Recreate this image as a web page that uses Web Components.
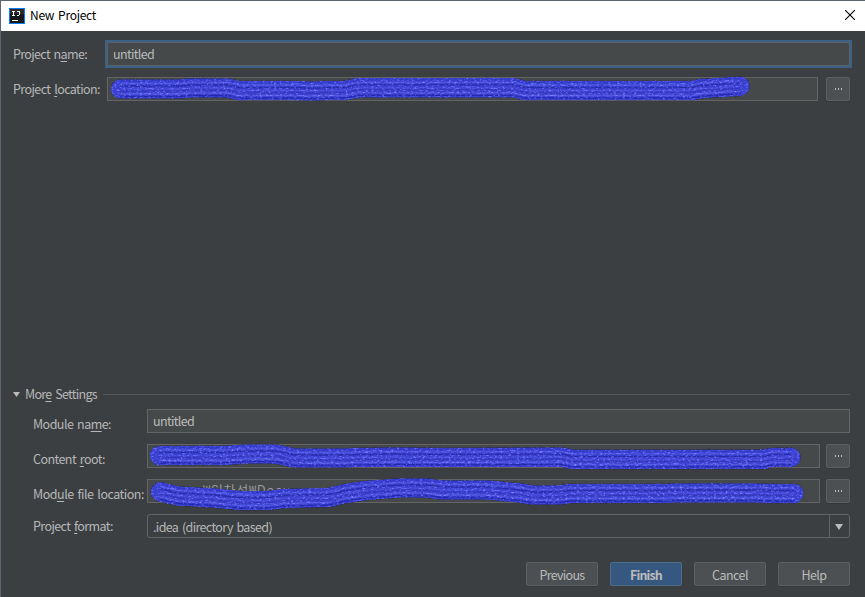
<!DOCTYPE html>
<html lang="en"><head><meta charset="utf-8"><title>New Project</title>
<style>html,body{margin:0;height:100%;overflow:hidden;background:#3c3f41}</style></head><body>
<project-dialog></project-dialog>
<script>
class BaseEl extends HTMLElement{
  mount(html){this.attachShadow({mode:'open'}).innerHTML=html}
}
/* A single line of text whose tracking is adjusted to fill the width "w". */
customElements.define('fit-text',class extends BaseEl{
  connectedCallback(){
    this.mount('<style>:host{display:block;white-space:nowrap}span{display:inline-block;white-space:pre;word-spacing:1.5px}::slotted(u){text-decoration-thickness:1px;text-underline-offset:2px;text-decoration-skip-ink:none}</style><span><slot></slot></span>');
    const s=this.shadowRoot.querySelector('span'),w=+this.getAttribute('w');
    if(w)s.style.letterSpacing=((w-s.getBoundingClientRect().width)/this.textContent.length)+'px';
  }});
customElements.define('title-bar',class extends BaseEl{
  connectedCallback(){this.mount(`<style>:host{display:flex;box-sizing:border-box;height:30px;padding:0 10px 0 8px;align-items:center;background:#fff;color:#000;font-size:12px}
  fit-text{margin-left:5px;flex:1;line-height:28px;height:30px}svg{display:block}.x{position:relative;top:-1px}</style>
  <svg width="16" height="16" shape-rendering="crispEdges"><rect width="16" height="16" fill="#087cfa"/><rect x="1" y="1" width="14" height="14" fill="#151719"/><rect x="1" y="1" width="14" height="5" fill="#2b2b2b"/><path d="M3 3.5h3M4.5 3v5M3 7.5h3M8 3.5h3M10.5 3v4M8 7.5h2M3 12.5h6" stroke="#fff" fill="none"/></svg>
  <fit-text w="66">${this.textContent}</fit-text>
  <svg class="x" width="10" height="10"><path d="M0 0L10 10M10 0L0 10" stroke="#000" stroke-width="1.1"/></svg>`)}});
customElements.define('text-field',class extends BaseEl{
  connectedCallback(){this.mount(`<style>:host{display:block;box-sizing:border-box;height:24px;border:1px solid #646464;background:#45494a;padding-left:5px;line-height:22px;flex:1;min-width:0;color:#bbb}
  :host([focused]){box-shadow:0 0 0 2px #3d6185;border-color:#55626c}</style><slot></slot>`)}});
customElements.define('push-button',class extends BaseEl{
  connectedCallback(){this.mount(`<style>:host{display:flex;justify-content:center;box-sizing:border-box;width:72px;height:24px;border:1px solid #5e6060;border-radius:2px;background:#4c5052;box-shadow:0 1px 0 #35383a;line-height:23px;color:#bbb}
  :host([primary]){background:#365880;border-color:#4c708c;font-weight:700;box-shadow:none}
  :host([browse]){width:24px;align-items:center}</style><slot></slot>`)}});
customElements.define('dots-icon',class extends BaseEl{
  connectedCallback(){this.mount(`<style>:host,svg{display:block}</style><svg width="8" height="2" shape-rendering="crispEdges"><path d="M1 1h1M4 1h1M7 1h1" stroke="#bbb" stroke-width="1.2"/></svg>`)}});
customElements.define('form-row',class extends BaseEl{
  connectedCallback(){this.mount(`<style>:host{display:flex;height:24px;margin-bottom:11px}
  .l{width:var(--label,94px);flex:none;line-height:24px;padding-top:var(--drop,0px);box-sizing:border-box}</style>
  <div class="l"><slot name="label"></slot></div><slot></slot>`)}});
customElements.define('combo-box',class extends BaseEl{
  connectedCallback(){this.mount(`<style>:host{display:flex;box-sizing:border-box;flex:1;height:24px;border:1px solid #646464;border-radius:3px;line-height:24px}
  .v{flex:1;padding-left:5px}.a{width:19px;border-left:1px solid #646464;display:grid;place-items:center}svg{margin:1px 1px 0 0}</style>
  <div class="v"><slot></slot></div><div class="a"><svg width="8" height="6"><path d="M0 0h8L4 6z" fill="#bbb"/></svg></div>`)}});
/* Marker strokes drawn over the path fields. */
customElements.define('ink-layer',class extends BaseEl{
  connectedCallback(){
    const paths=['M120.5 89L180 89 190 88 228 88 238 90.5 297 90.5 307 91 318 91 325 90.5 345 90.5 358 87.8 514 87.8 524 90.5 692 90.5 702 88.5 740 86.3',
    'M159.5 455.5L225 455.5 245 454 276 454 294 458 348 458 353 457.5 398 457 440 457.5 562 457 572 459.3 764 459.3 772 457.5 791 457.3',
    'M160.5 491.8L178 496 214 498 240 500.5 268 500.5 283 498.5 328 497.5 346 493.5 366 490.5 400 488 425 488 442 490 488 490 520 493 532 495 560 495 570 493.5 665 493.5 672 493 758 493 768 493.5 794 493.5'];
    const lines=[[-8,'#292fbd',.5],[-5.5,'#6068f0',.5],[-3,'#20249f',.75],[0,'#5159e5',.5],[2,'#272ca8',.5],[5,'#6970ef',.5],[7.5,'#1b22a5',.8]];
    this.mount(`<style>:host{position:absolute;inset:-1px 0 0 -1px}svg{display:block}</style><svg width="865" height="597"><defs>
    <filter id="grain" x="0" y="0" width="865" height="597" filterUnits="userSpaceOnUse" color-interpolation-filters="sRGB">
    <feTurbulence type="fractalNoise" baseFrequency=".35 .6" numOctaves="3" seed="8" result="n"/>
    <feColorMatrix in="n" values="1.3 0 0 0 -.67  1.3 0 0 0 -.67  1.2 0 0 0 -.6  0 0 0 0 1" result="m"/>
    <feDisplacementMap in="SourceGraphic" in2="n" scale="2" xChannelSelector="R" yChannelSelector="G" result="d"/>
    <feComposite in="d" in2="m" operator="arithmetic" k2="1" k3=".5" result="c"/><feComposite in="c" in2="d" operator="in"/></filter></defs>
    <g filter="url(#grain)" fill="none" stroke-linecap="round" stroke-linejoin="round">${paths.map(p=>`<path d="${p}" stroke="#3a40cd" stroke-width="19.7"/>`+lines.map(([y,c,o])=>`<path d="${p}" transform="translate(0 ${y})" stroke="${c}" opacity="${o}" stroke-width="1.3" stroke-linecap="butt" stroke-dasharray="27 1 14 2"/>`).join('')).join('')}</g></svg>`)}});
customElements.define('project-dialog',class extends BaseEl{
  connectedCallback(){this.mount(`<style>
  :host{display:flex;flex-direction:column;position:relative;box-sizing:border-box;width:865px;height:597px;border:solid #5c6673;border-width:1px 0 0 1px;background:#3c3f41;color:#b6b7b8;font:12.5px "Noto Sans CJK KR","Noto Sans",sans-serif}
  .top{padding:11px 15px 0 12px}.space{flex:1}push-button[browse]{margin-left:8px;flex:none}
  .sec{display:flex;align-items:center;height:20px;padding:0 15px 2px 12px}.sec fit-text{margin:0 6px 0 5px;line-height:20px}.sec i{flex:1;height:1px;background:#55585a}
  .more{--label:114px;--drop:3px;padding:3px 15px 0 32px}.more push-button[browse]{margin-left:6px}
  .foot{display:flex;justify-content:flex-end;gap:12px;padding:13px 15px 11px 0}
  .frag{display:block;padding-left:50px;font-size:13px;line-height:20px;color:#999}.last{--drop:-1px}
  </style>
  <title-bar>New Project</title-bar>
  <div class="top">
  <form-row><fit-text slot="label" w="74">Project n<u>a</u>me:</fit-text><text-field focused><fit-text w="41">untitled</fit-text></text-field></form-row>
  <form-row><fit-text slot="label" w="87">Project <u>l</u>ocation:</fit-text><text-field></text-field><push-button browse><dots-icon></dots-icon></push-button></form-row></div>
  <div class="space"></div>
  <div class="sec"><svg width="7" height="5"><path d="M0 0h7L3.5 5z" fill="#bbb"/></svg><fit-text w="72">Mor<u>e</u> Settings</fit-text><i></i></div>
  <div class="more">
  <form-row><fit-text slot="label" w="78">Module na<u>m</u>e:</fit-text><text-field><fit-text w="41">untitled</fit-text></text-field></form-row>
  <form-row><fit-text slot="label" w="72">Content <u>r</u>oot:</fit-text><text-field></text-field><push-button browse><dots-icon></dots-icon></push-button></form-row>
  <form-row><fit-text slot="label" w="111">Mod<u>u</u>le file location:</fit-text><text-field><fit-text class="frag" w="88">₩임차성₩Docu</fit-text></text-field><push-button browse><dots-icon></dots-icon></push-button></form-row>
  <form-row class="last"><fit-text slot="label" w="80">Project <u>f</u>ormat:</fit-text><combo-box><fit-text w="119">.idea (directory based)</fit-text></combo-box></form-row></div>
  <div class="foot"><push-button><fit-text w="45">Previous</fit-text></push-button><push-button primary><fit-text w="32">Finish</fit-text></push-button><push-button><fit-text w="36">Cancel</fit-text></push-button><push-button><fit-text w="25">Help</fit-text></push-button></div>
  <ink-layer></ink-layer>`)}});
</script></body></html>
